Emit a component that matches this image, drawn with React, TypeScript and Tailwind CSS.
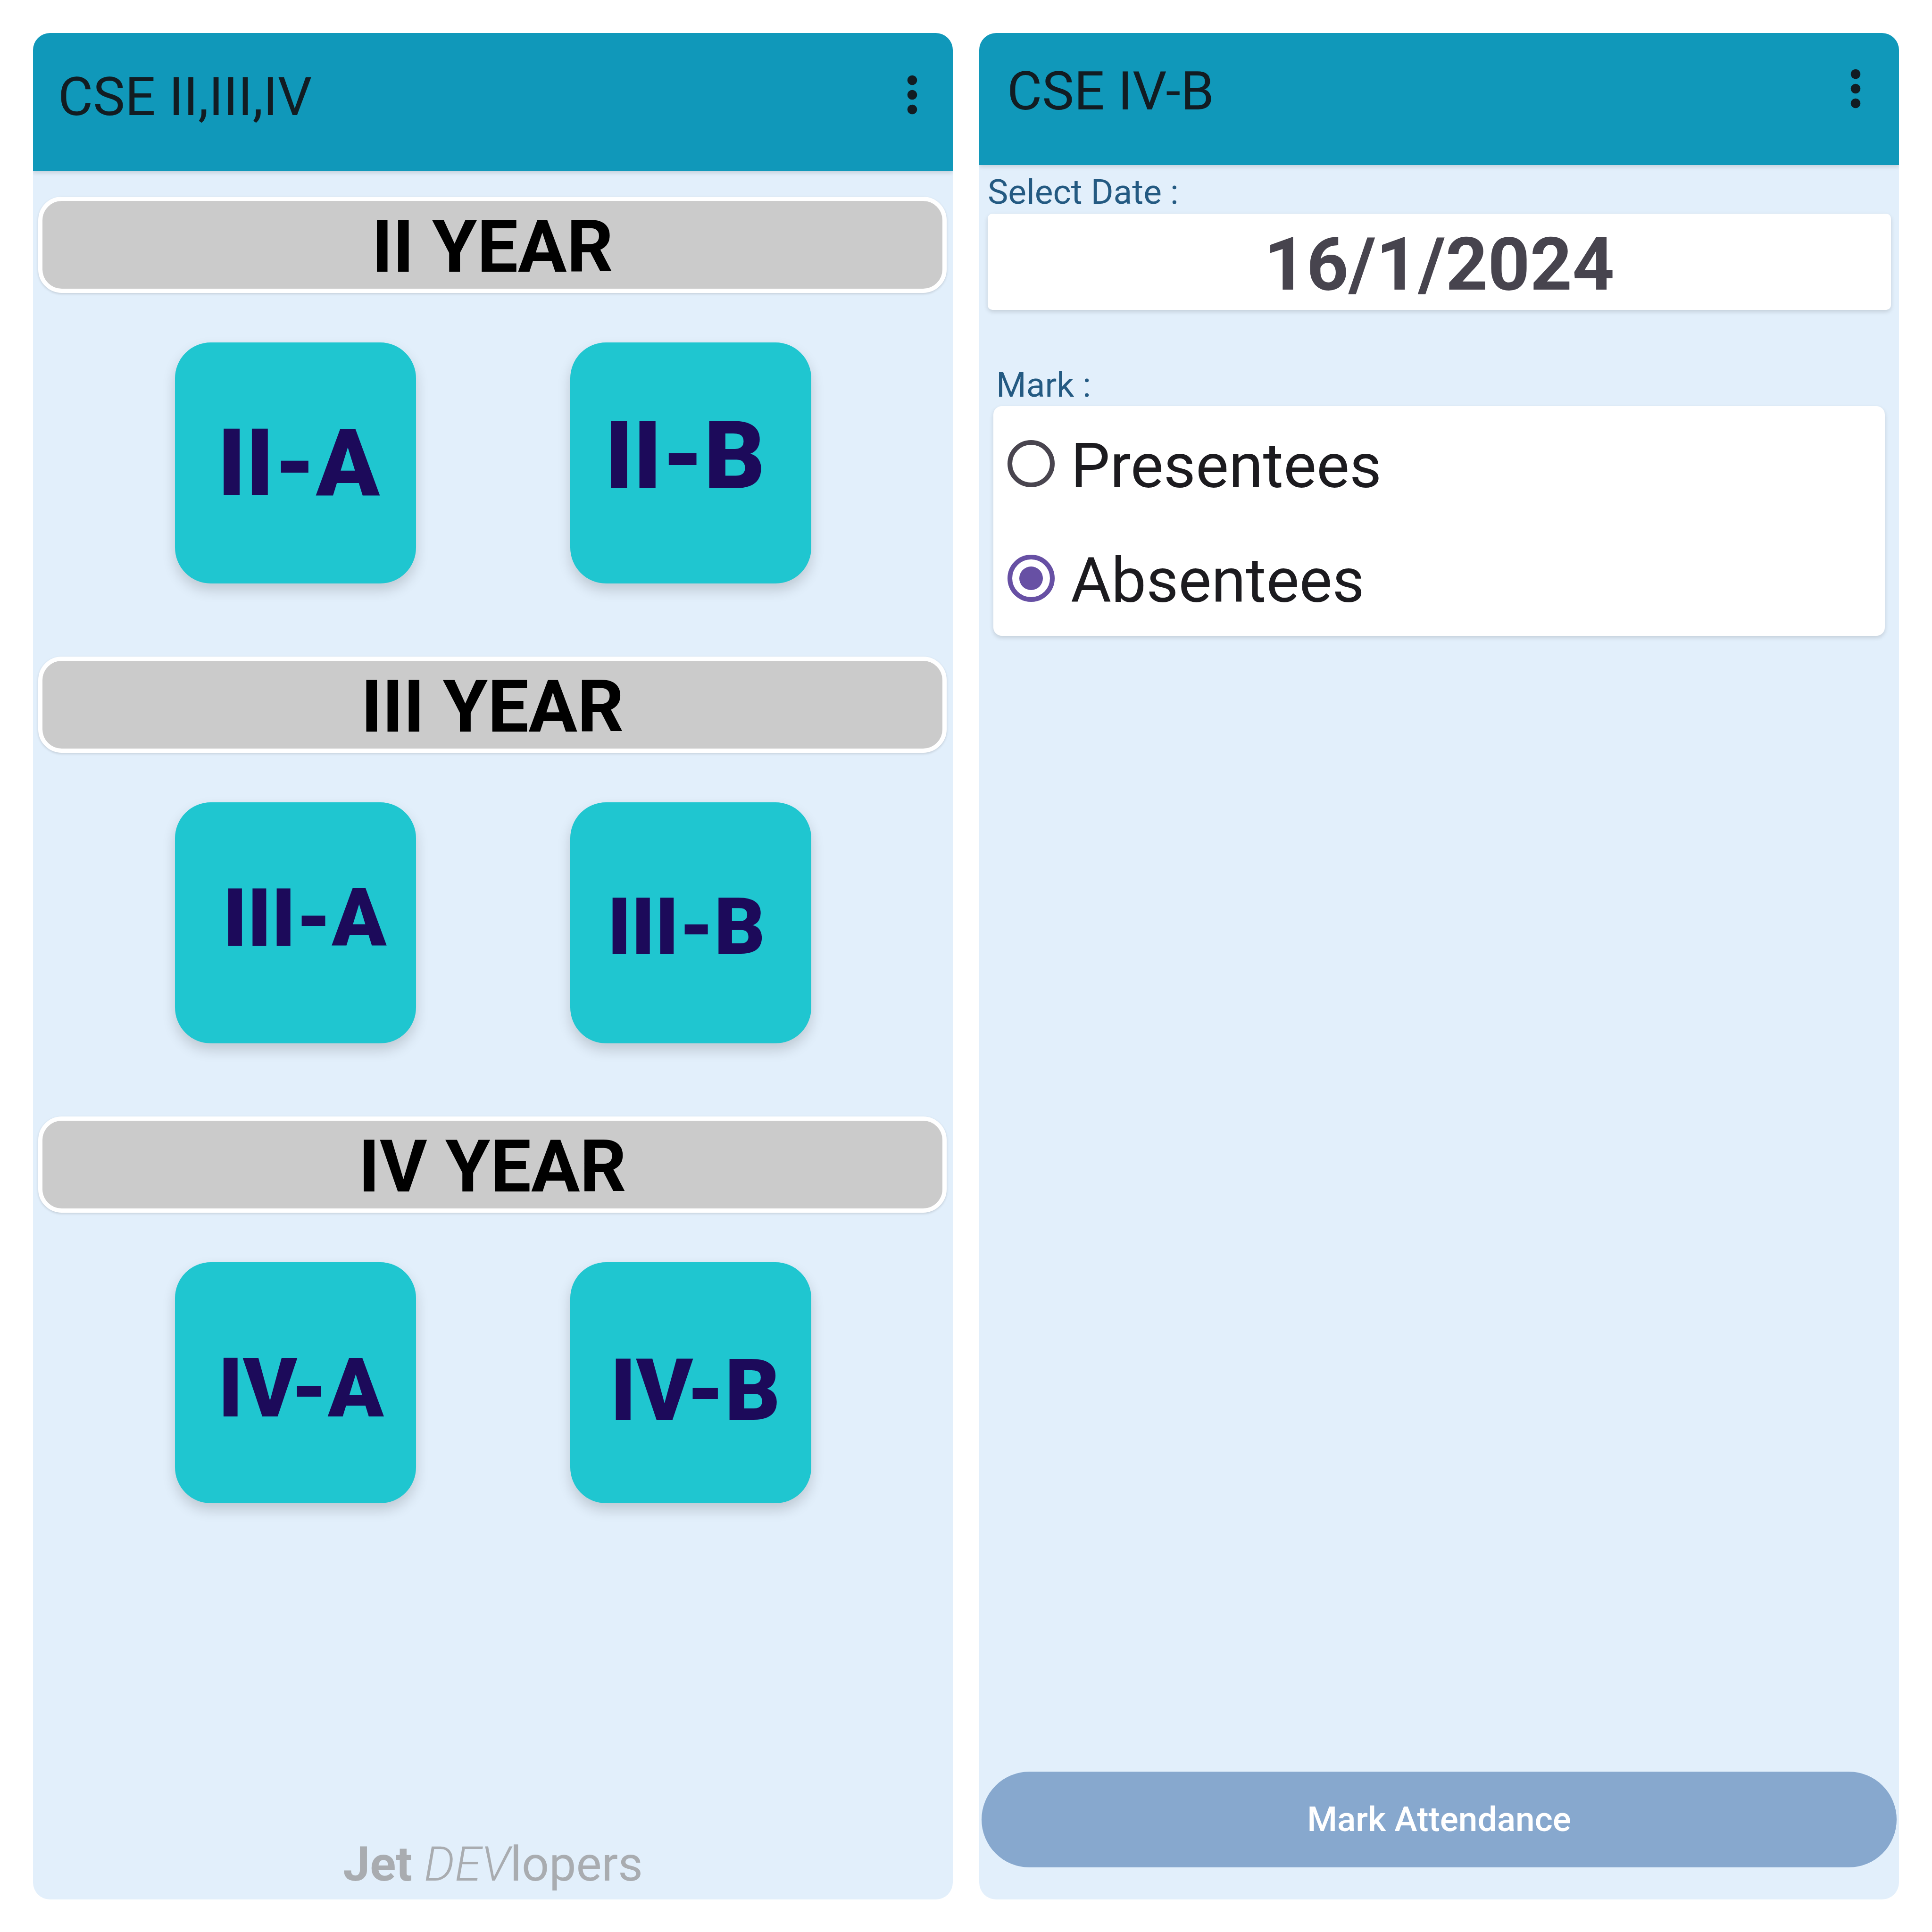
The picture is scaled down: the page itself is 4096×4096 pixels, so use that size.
import React from "react";

type TileInfo = { label: string; cls: string };

// each tile label sits a little off-centre in the original, so size/offset per tile
const years: { label: string; tiles: TileInfo[] }[] = [
  {
    label: "II YEAR",
    tiles: [
      { label: "II-A", cls: "text-[198px] translate-x-[7px]" },
      { label: "II-B", cls: "text-[200px] -translate-x-[12px] -translate-y-[15px]" },
    ],
  },
  {
    label: "III YEAR",
    tiles: [
      { label: "III-A", cls: "text-[170px] translate-x-[20px] -translate-y-[10px]" },
      { label: "III-B", cls: "text-[167px] -translate-x-[9px] translate-y-[9px]" },
    ],
  },
  {
    label: "IV YEAR",
    tiles: [
      { label: "IV-A", cls: "text-[174px] translate-x-[12px] translate-y-[12px]" },
      { label: "IV-B", cls: "text-[182px] translate-x-[10px] translate-y-[16px]" },
    ],
  },
];

function MoreIcon({ className }: { className?: string }) {
  return (
    <svg viewBox="0 0 24 24" className={className} fill="#121c22">
      <circle cx="12" cy="6" r="2" />
      <circle cx="12" cy="12" r="2" />
      <circle cx="12" cy="18" r="2" />
    </svg>
  );
}

function YearBar({ label }: { label: string }) {
  return (
    <div className="ml-[11px] mr-[13px] h-[204px] rounded-[50px] border-[9px] border-white bg-[#cbcbcb] shadow-[0_2px_5px_rgba(0,0,0,0.15)] flex items-center justify-center">
      <span className="mt-[10px] text-[154px] leading-none font-bold text-black">{label}</span>
    </div>
  );
}

function Tile({ tile }: { tile: TileInfo }) {
  return (
    <button className="w-[511px] h-[511px] rounded-[76px] bg-[#1fc6d0] shadow-[0_14px_28px_rgba(0,0,0,0.16)] flex items-center justify-center">
      <span className={"leading-none font-black text-[#1c0a5a] " + tile.cls}>{tile.label}</span>
    </button>
  );
}

function SectionsPanel() {
  return (
    <div className="w-[1950px] h-[3957px] shrink-0 rounded-[36px] overflow-hidden bg-[#e2effb] flex flex-col">
      <header className="relative z-10 h-[293px] shrink-0 bg-[#1098ba] shadow-[0_4px_8px_rgba(0,0,0,0.12)] flex items-center justify-between pl-[53px] pr-[24px]">
        <h1 className="mb-[24px] text-[114px] leading-none text-[#121c22]">CSE II,III,IV</h1>
        <MoreIcon className="mb-[32px] w-[124px] h-[124px]" />
      </header>

      <div className="flex flex-col pt-[54px]">
        {years.map((y, i) => (
          <section key={y.label} className={i === 0 ? "" : "mt-[155px]"}>
            <YearBar label={y.label} />
            <div className="mt-[105px] flex justify-center gap-[327px]">
              {y.tiles.map((t) => (
                <Tile key={t.label} tile={t} />
              ))}
            </div>
          </section>
        ))}
      </div>

      <footer className="mt-auto pb-[24px] text-center text-[102px] leading-none text-[#a9acb0]">
        <span className="font-bold">Jet </span>
        <span className="italic font-light">DEV</span>
        <span>lopers</span>
      </footer>
    </div>
  );
}

function RadioRow({ label, checked }: { label: string; checked?: boolean }) {
  return (
    <label className="h-[243px] flex items-center pl-[30px] gap-[34px]">
      <span
        className={
          checked
            ? "w-[100px] h-[100px] rounded-full border-[10px] border-[#6750a4] flex items-center justify-center"
            : "w-[100px] h-[100px] rounded-full border-[10px] border-[#49454f]"
        }
      >
        {checked && <span className="w-[50px] h-[50px] rounded-full bg-[#6750a4]" />}
      </span>
      <span className="mt-[10px] text-[132px] leading-none text-[#1c1b1f]">{label}</span>
    </label>
  );
}

function AttendancePanel() {
  return (
    <div className="w-[1950px] h-[3957px] shrink-0 rounded-[36px] overflow-hidden bg-[#e2effb] flex flex-col">
      <header className="relative z-10 h-[280px] shrink-0 bg-[#1098ba] shadow-[0_4px_8px_rgba(0,0,0,0.12)] flex items-center justify-between pl-[59px] pr-[30px]">
        <h1 className="mb-[34px] text-[114px] leading-none text-[#121c22]">CSE IV-B</h1>
        <MoreIcon className="mb-[44px] w-[124px] h-[124px]" />
      </header>

      <p className="mt-[21px] pl-[18px] text-[73px] leading-none text-[#245a82]">Select Date :</p>
      <div className="mt-[9px] ml-[18px] mr-[17px] h-[204px] shrink-0 rounded-[10px] bg-white shadow-[0_4px_10px_rgba(0,0,0,0.14)] flex items-center justify-center">
        <span className="mt-[12px] text-[156px] leading-none font-bold text-[#47444e]">16/1/2024</span>
      </div>

      <p className="mt-[123px] pl-[36px] text-[73px] leading-none text-[#245a82]">Mark :</p>
      <div className="mt-[8px] mx-[30px] h-[487px] shrink-0 rounded-[18px] bg-white shadow-[0_4px_10px_rgba(0,0,0,0.14)] flex flex-col">
        <RadioRow label="Presentees" />
        <RadioRow label="Absentees" checked />
      </div>

      <button className="mt-auto mb-[68px] mx-[5px] h-[203px] shrink-0 rounded-full bg-[#87a8ce] text-white text-[73px] font-medium">
        Mark Attendance
      </button>
    </div>
  );
}

export default function App() {
  return (
    <div className="w-[4096px] h-[4096px] bg-white flex gap-[56px] pl-[70px] pt-[70px] font-['Roboto',sans-serif]">
      <SectionsPanel />
      <AttendancePanel />
    </div>
  );
}
